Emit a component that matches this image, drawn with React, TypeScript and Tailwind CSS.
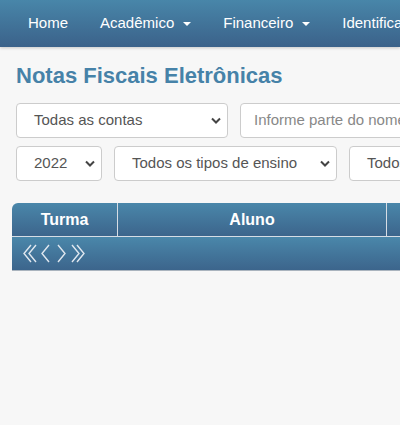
import React from "react";

const Caret = () => (
  <span className="ml-[9px] inline-block w-0 h-0 border-l-[4px] border-r-[4px] border-t-[4px] border-l-transparent border-r-transparent border-t-white align-middle" />
);

const Chevron = () => (
  <svg width="10" height="7" viewBox="0 0 10 7" className="shrink-0">
    <path d="M1 1.5 L5 5.5 L9 1.5" fill="none" stroke="#444" strokeWidth="2" />
  </svg>
);

const SelectBox = ({ label, w }: { label: string; w: string }) => (
  <div className={`${w} h-[35px] shrink-0 bg-white border border-[#cccccc] rounded-[4px] flex items-center justify-between pl-[17px] pr-[6px] text-[15px] text-[#555]`}>
    <span className="whitespace-nowrap">{label}</span>
    <Chevron />
  </div>
);

export default function App() {
  return (
    <div className="w-[400px] h-[425px] overflow-hidden bg-[#f7f7f7]" style={{ fontFamily: '"Liberation Sans", Arial, sans-serif' }}>
      <nav className="h-[47px] bg-gradient-to-b from-[#4886a9] to-[#3b628a] shadow-[0_1px_3px_rgba(0,0,0,0.2)] flex items-center pl-[28px] gap-[32px] text-white text-[15px] whitespace-nowrap">
        <span>Home</span>
        <span className="flex items-center">Acadêmico<Caret /></span>
        <span className="flex items-center">Financeiro<Caret /></span>
        <span>Identificação</span>
      </nav>
      <h1 className="ml-[16px] mt-[16px] text-[22px] leading-[26px] font-bold text-[#4682a8] whitespace-nowrap">Notas Fiscais Eletrônicas</h1>
      <div className="ml-[16px] mt-[14px] flex gap-[12px]">
        <SelectBox label="Todas as contas" w="w-[212px]" />
        <div className="w-[300px] h-[35px] shrink-0 bg-white border border-[#cccccc] rounded-[4px] flex items-center pl-[13px] text-[15px] text-[#888] whitespace-nowrap">
          Informe parte do nome
        </div>
      </div>
      <div className="ml-[16px] mt-[8px] flex gap-[12px]">
        <SelectBox label="2022" w="w-[86px]" />
        <SelectBox label="Todos os tipos de ensino" w="w-[223px]" />
        <SelectBox label="Todos" w="w-[200px]" />
      </div>
      <div className="ml-[12px] mt-[22px] w-[420px] rounded-tl-[6px] overflow-hidden border-b border-[#aab4be]">
        <div className="h-[33px] flex bg-gradient-to-b from-[#4a87aa] to-[#3c658c] text-white text-[16px] font-bold">
          <div className="w-[106px] flex items-center justify-center border-r border-[#d6dde5]">Turma</div>
          <div className="w-[269px] flex items-center justify-center border-r border-[#d6dde5]">Aluno</div>
          <div className="flex-1" />
        </div>
        <div className="h-[1px] bg-[#d6dde5]" />
        <div className="h-[33px] flex items-center pl-[11px] bg-gradient-to-b from-[#4a87aa] to-[#3c658c]">
          <svg width="66" height="19" viewBox="0 0 66 19">
            <g fill="none" stroke="#dfe7ef" strokeWidth="1.4">
              <path d="M8 1 L1 9.5 L8 18" />
              <path d="M13 1 L6 9.5 L13 18" />
              <path d="M26 1 L19 9.5 L26 18" />
              <path d="M35 1 L42 9.5 L35 18" />
              <path d="M49 1 L56 9.5 L49 18" />
              <path d="M54 1 L61 9.5 L54 18" />
            </g>
          </svg>
        </div>
      </div>
    </div>
  );
}
